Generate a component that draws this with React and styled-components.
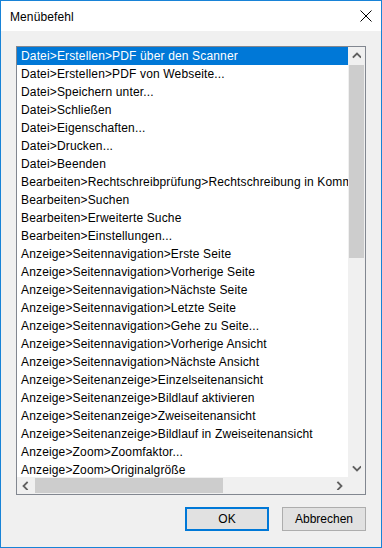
import React from 'react';
import styled, { createGlobalStyle } from 'styled-components';

const GlobalStyle = createGlobalStyle`
    html, body {
        margin: 0;
        padding: 0;
        background: #ffffff;
    }
    * {
        box-sizing: border-box;
    }
`;

const StyledWindow = styled.div`
    width: 382px;
    height: 548px;
    border: 1px solid #1883d7;
    background-color: #f0f0f0;
    display: flex;
    flex-direction: column;
    font-family: "Liberation Sans", Arial, sans-serif;
    font-size: 12px;
    color: #000000;
`;

const StyledTitleBar = styled.div`
    height: 30px;
    background-color: #ffffff;
    display: flex;
    align-items: center;
    justify-content: space-between;
    padding: 0 9px 0 9px;
`;

const StyledTitle = styled.span`
    font-size: 12px;
    margin-top: 1px;
    letter-spacing: 0.1px;
`;

const StyledBody = styled.div`
    flex: 1;
    display: flex;
    flex-direction: column;
    padding: 15px 15px 16px 15px;
`;

const StyledListBox = styled.div`
    height: 449px;
    border: 1px solid #828790;
    background-color: #ffffff;
    display: grid;
    grid-template-columns: 1fr 17px;
    grid-template-rows: 1fr 17px;
`;

const StyledViewport = styled.ul`
    list-style: none;
    margin: 0;
    padding: 0;
    overflow: hidden;
`;

const StyledItem = styled.li`
    height: 18px;
    line-height: 18px;
    padding-left: 4px;
    white-space: nowrap;
    letter-spacing: 0.15px;
    background-color: ${({ selected }) => (selected ? '#0078d7' : 'transparent')};
    color: ${({ selected }) => (selected ? '#ffffff' : '#000000')};
`;

const StyledScrollBar = styled.div`
    display: flex;
    flex-direction: ${({ horizontal }) => (horizontal ? 'row' : 'column')};
    background-color: #f0f0f0;
`;

const StyledArrow = styled.div`
    flex: 0 0 17px;
    display: flex;
    align-items: center;
    justify-content: center;
    color: #606060;
`;

const StyledTrack = styled.div`
    flex: 1;
    display: flex;
    flex-direction: ${({ horizontal }) => (horizontal ? 'row' : 'column')};
    padding: ${({ horizontal }) => (horizontal ? '0 0 0 1px' : '1px 0 0 0')};
`;

const StyledThumb = styled.div`
    background-color: #cdcdcd;
    flex: 0 0 ${({ size }) => size}px;
    margin: ${({ horizontal }) => (horizontal ? '1px 0' : '0 1px')};
`;

const StyledCorner = styled.div`
    background-color: #f0f0f0;
`;

const StyledButtonRow = styled.div`
    display: flex;
    justify-content: flex-end;
    gap: 13px;
    margin-top: 12px;
`;

const StyledButton = styled.button`
    width: 84px;
    height: 24px;
    padding: 0;
    font-family: inherit;
    font-size: 12px;
    color: #000000;
    background-color: #e1e1e1;
    border: ${({ primary }) => (primary ? '2px solid #0078d7' : '1px solid #adadad')};
`;

const Chevron = ({ dir }) => {
    const paths = {
        up: 'M1.5 6 L5 2.5 L8.5 6',
        down: 'M1.5 3 L5 6.5 L8.5 3',
        left: 'M6 1.5 L2.5 5 L6 8.5',
        right: 'M3 1.5 L6.5 5 L3 8.5',
    };
    return (
        <svg width="9" height="9" viewBox="0 0 9 9">
            <path d={paths[dir]} fill="none" stroke="currentColor" strokeWidth="1.8" strokeLinecap="square" />
        </svg>
    );
};

const CloseIcon = () => (
    <svg width="12" height="12" viewBox="0 0 12 12">
        <path d="M0.5 0.5 L11.5 11.5 M11.5 0.5 L0.5 11.5" stroke="#000000" strokeWidth="1" />
    </svg>
);

const items = [
    'Datei>Erstellen>PDF über den Scanner',
    'Datei>Erstellen>PDF von Webseite...',
    'Datei>Speichern unter...',
    'Datei>Schließen',
    'Datei>Eigenschaften...',
    'Datei>Drucken...',
    'Datei>Beenden',
    'Bearbeiten>Rechtschreibprüfung>Rechtschreibung in Kommentaren...',
    'Bearbeiten>Suchen',
    'Bearbeiten>Erweiterte Suche',
    'Bearbeiten>Einstellungen...',
    'Anzeige>Seitennavigation>Erste Seite',
    'Anzeige>Seitennavigation>Vorherige Seite',
    'Anzeige>Seitennavigation>Nächste Seite',
    'Anzeige>Seitennavigation>Letzte Seite',
    'Anzeige>Seitennavigation>Gehe zu Seite...',
    'Anzeige>Seitennavigation>Vorherige Ansicht',
    'Anzeige>Seitennavigation>Nächste Ansicht',
    'Anzeige>Seitenanzeige>Einzelseitenansicht',
    'Anzeige>Seitenanzeige>Bildlauf aktivieren',
    'Anzeige>Seitenanzeige>Zweiseitenansicht',
    'Anzeige>Seitenanzeige>Bildlauf in Zweiseitenansicht',
    'Anzeige>Zoom>Zoomfaktor...',
    'Anzeige>Zoom>Originalgröße',
];

const App = () => {
    return (
        <>
            <GlobalStyle />
            <StyledWindow>
                <StyledTitleBar>
                    <StyledTitle>Menübefehl</StyledTitle>
                    <CloseIcon />
                </StyledTitleBar>
                <StyledBody>
                    <StyledListBox>
                        <StyledViewport>
                            {items.map((item, i) => (
                                <StyledItem key={item} selected={i === 0}>{item}</StyledItem>
                            ))}
                        </StyledViewport>
                        <StyledScrollBar>
                            <StyledArrow><Chevron dir="up" /></StyledArrow>
                            <StyledTrack>
                                <StyledThumb size={193} />
                            </StyledTrack>
                            <StyledArrow><Chevron dir="down" /></StyledArrow>
                        </StyledScrollBar>
                        <StyledScrollBar horizontal>
                            <StyledArrow><Chevron dir="left" /></StyledArrow>
                            <StyledTrack horizontal>
                                <StyledThumb horizontal size={188} />
                            </StyledTrack>
                            <StyledArrow><Chevron dir="right" /></StyledArrow>
                        </StyledScrollBar>
                        <StyledCorner />
                    </StyledListBox>
                    <StyledButtonRow>
                        <StyledButton primary>OK</StyledButton>
                        <StyledButton>Abbrechen</StyledButton>
                    </StyledButtonRow>
                </StyledBody>
            </StyledWindow>
        </>
    );
};

export default App;
